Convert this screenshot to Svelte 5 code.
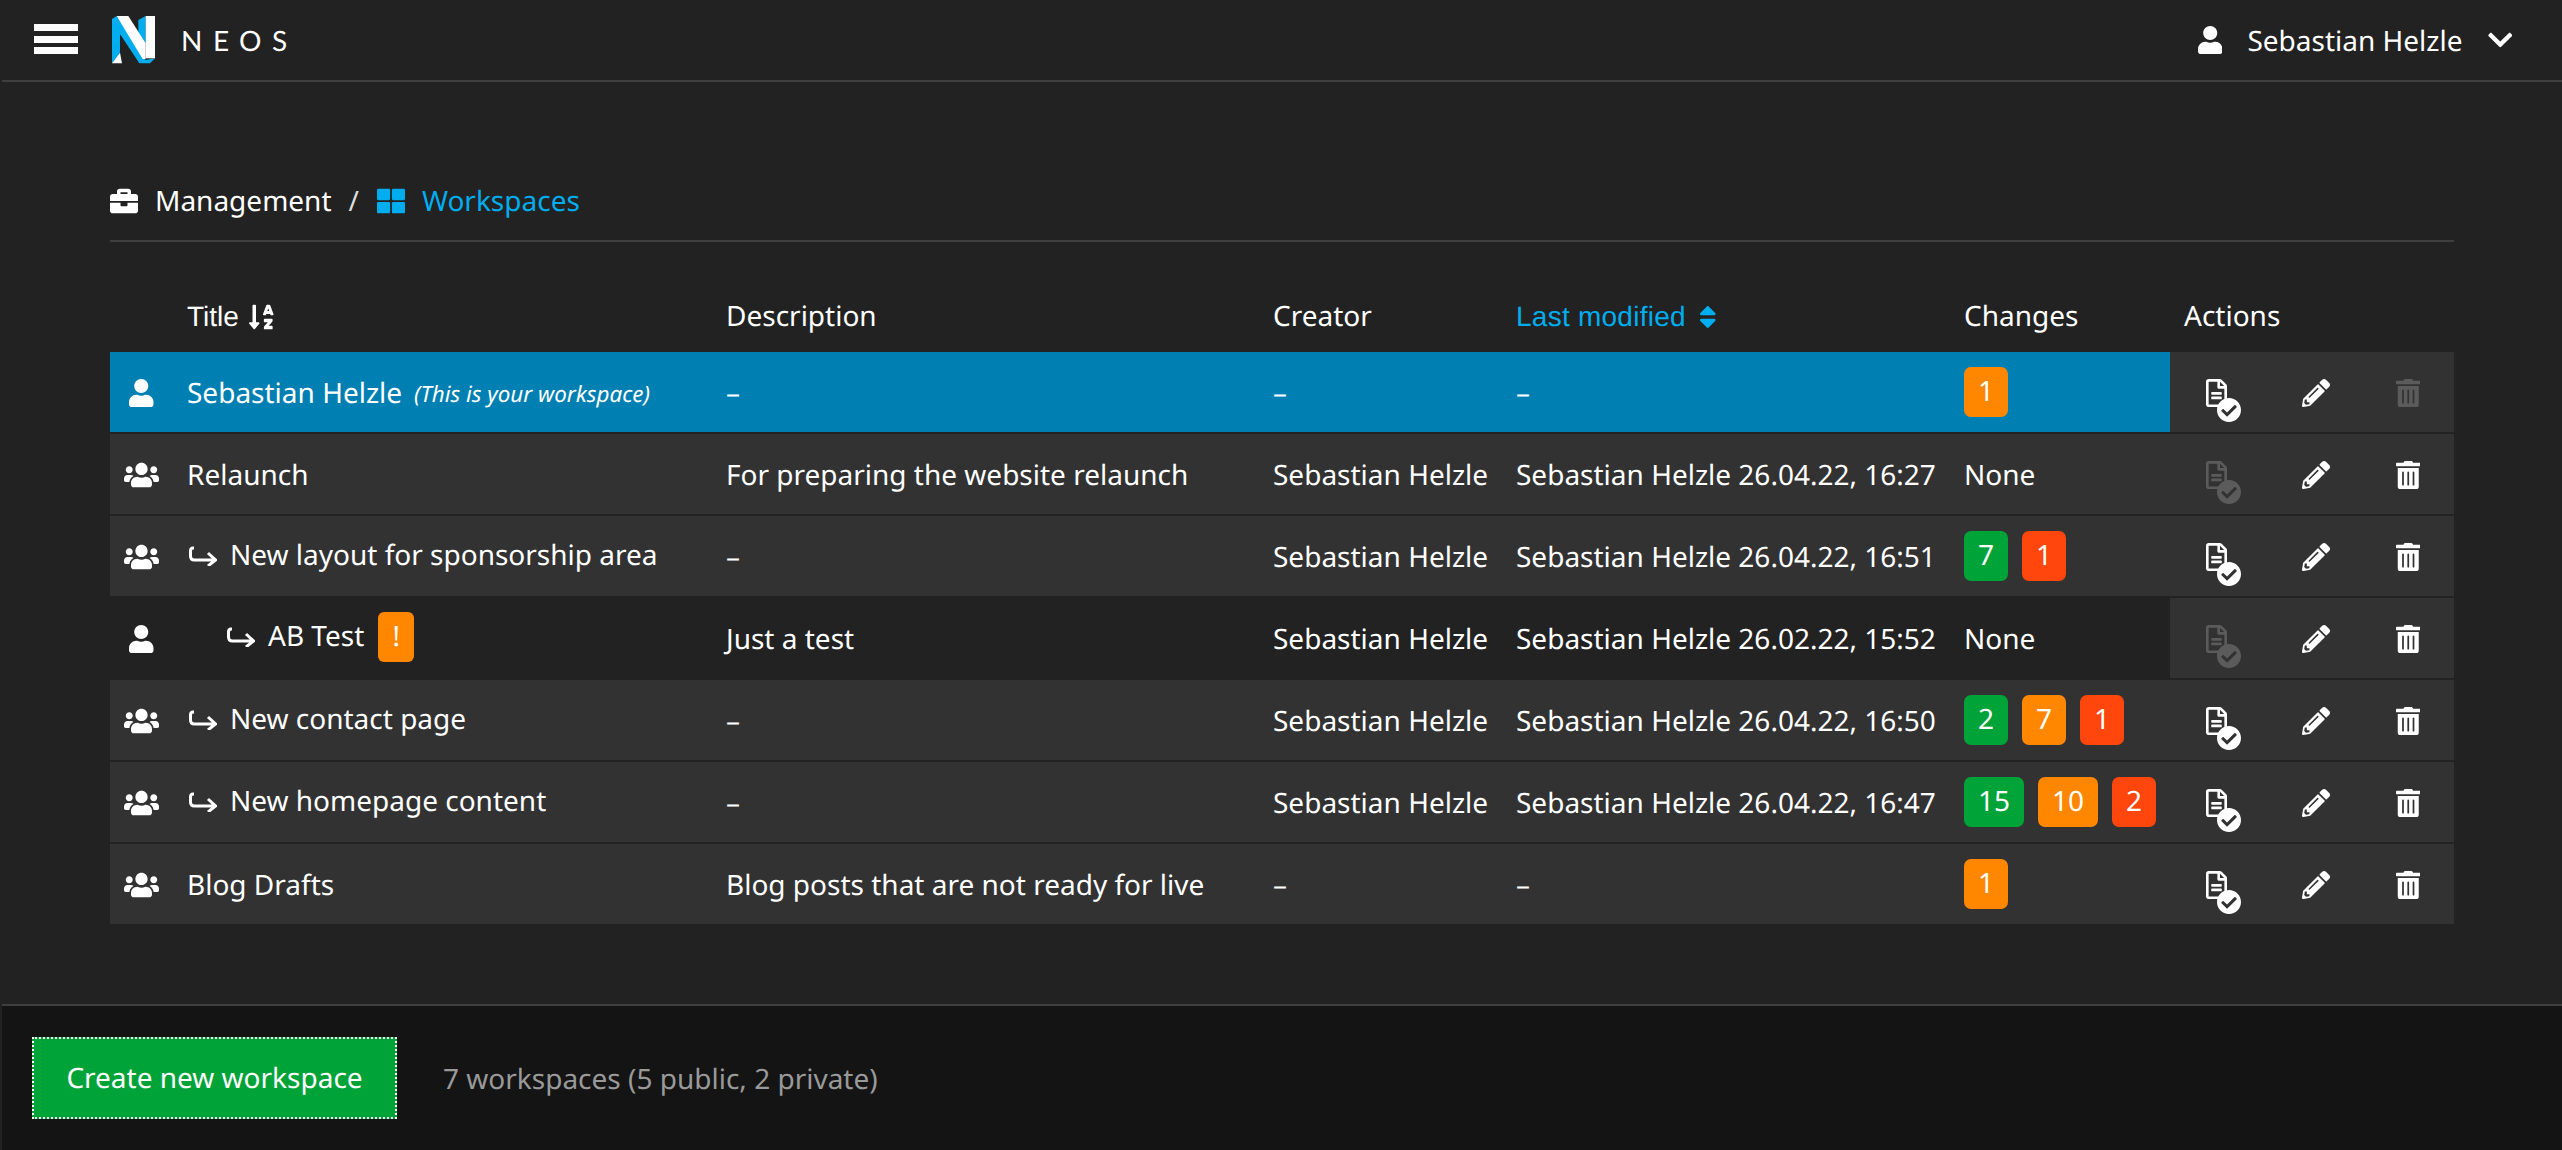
<script>
  const rows = [
    { icon: 'user', name: 'Sebastian Helzle', note: '(This is your workspace)', desc: '–', creator: '–', modified: '–', badges: [['o', 1]], active: true, publish: true, del: false },
    { icon: 'users', name: 'Relaunch', desc: 'For preparing the website relaunch', creator: 'Sebastian Helzle', modified: 'Sebastian Helzle 26.04.22, 16:27', none: true, publish: false, del: true },
    { icon: 'users', name: 'New layout for sponsorship area', depth: 1, desc: '–', creator: 'Sebastian Helzle', modified: 'Sebastian Helzle 26.04.22, 16:51', badges: [['g', 7], ['r', 1]], publish: true, del: true },
    { icon: 'user', name: 'AB Test', depth: 2, warn: true, desc: 'Just a test', creator: 'Sebastian Helzle', modified: 'Sebastian Helzle 26.02.22, 15:52', none: true, dark: true, publish: false, del: true },
    { icon: 'users', name: 'New contact page', depth: 1, desc: '–', creator: 'Sebastian Helzle', modified: 'Sebastian Helzle 26.04.22, 16:50', badges: [['g', 2], ['o', 7], ['r', 1]], publish: true, del: true },
    { icon: 'users', name: 'New homepage content', depth: 1, desc: '–', creator: 'Sebastian Helzle', modified: 'Sebastian Helzle 26.04.22, 16:47', badges: [['g', 15], ['o', 10], ['r', 2]], publish: true, del: true },
    { icon: 'users', name: 'Blog Drafts', desc: 'Blog posts that are not ready for live', creator: '–', modified: '–', badges: [['o', 1]], publish: true, del: true }
  ];
  const P = {
    user: 'M224 256c70.7 0 128-57.3 128-128S294.7 0 224 0 96 57.3 96 128s57.3 128 128 128zm89.6 32h-16.7c-22.2 10.2-46.9 16-72.9 16s-50.6-5.8-72.9-16h-16.7C60.2 288 0 348.2 0 422.4V464c0 26.5 21.5 48 48 48h352c26.5 0 48-21.5 48-48v-41.6c0-74.2-60.2-134.4-134.4-134.4z',
    users: 'M96 224c35.3 0 64-28.7 64-64s-28.7-64-64-64-64 28.7-64 64 28.7 64 64 64zm448 0c35.3 0 64-28.7 64-64s-28.7-64-64-64-64 28.7-64 64 28.7 64 64 64zm32 32h-64c-17.6 0-33.5 7.1-45.1 18.6 40.3 22.1 68.9 62 75.1 109.4h66c17.7 0 32-14.3 32-32v-32c0-35.3-28.7-64-64-64zm-256 0c61.9 0 112-50.1 112-112S381.9 32 320 32 208 82.1 208 144s50.1 112 112 112zm76.8 32h-8.3c-20.8 10-43.9 16-68.5 16s-47.6-6-68.5-16h-8.3C179.6 288 128 339.6 128 403.2V432c0 26.5 21.5 48 48 48h288c26.5 0 48-21.5 48-48v-28.8c0-63.6-51.6-115.2-115.2-115.2zm-223.7-13.4C161.5 263.1 145.6 256 128 256H64c-35.3 0-64 28.7-64 64v32c0 17.7 14.3 32 32 32h65.9c6.3-47.4 34.9-87.3 75.2-109.4z',
    pencil: 'M497.9 142.1l-46.1 46.1c-4.7 4.7-12.3 4.7-17 0l-111-111c-4.7-4.7-4.7-12.3 0-17l46.1-46.1c18.7-18.7 49.1-18.7 67.9 0l60.1 60.1c18.8 18.7 18.8 49.1 0 67.9zM284.2 99.8L21.6 362.4.4 483.9c-2.9 16.4 11.4 30.6 27.8 27.8l121.5-21.3 262.6-262.6c4.7-4.7 4.7-12.3 0-17l-111-111c-4.8-4.7-12.4-4.7-17.1 0zM124.1 339.9c-5.5-5.5-5.5-14.3 0-19.8l154-154c5.5-5.5 14.3-5.5 19.8 0s5.5 14.3 0 19.8l-154 154c-5.5 5.5-14.3 5.5-19.8 0zM88 424h48v36.3l-64.5 11.3-31.1-31.1L51.7 376H88v48z',
    trash: 'M32 464a48 48 0 0 0 48 48h288a48 48 0 0 0 48-48V128H32zm272-256a16 16 0 0 1 32 0v224a16 16 0 0 1-32 0zm-96 0a16 16 0 0 1 32 0v224a16 16 0 0 1-32 0zm-96 0a16 16 0 0 1 32 0v224a16 16 0 0 1-32 0zM432 32H312l-9.4-18.7A24 24 0 0 0 281.1 0H166.8a23.72 23.72 0 0 0-21.4 13.3L136 32H16A16 16 0 0 0 0 48v32a16 16 0 0 0 16 16h416a16 16 0 0 0 16-16V48a16 16 0 0 0-16-16z',
    file: 'M288 248v28c0 6.6-5.4 12-12 12H108c-6.6 0-12-5.4-12-12v-28c0-6.6 5.4-12 12-12h168c6.6 0 12 5.4 12 12zm-12 72H108c-6.6 0-12 5.4-12 12v28c0 6.6 5.4 12 12 12h168c6.6 0 12-5.4 12-12v-28c0-6.6-5.4-12-12-12zm108-188.1V464c0 26.5-21.5 48-48 48H48c-26.5 0-48-21.5-48-48V48C0 21.5 21.5 0 48 0h204.1C264.8 0 277 5.1 286 14.1L369.9 98c9 8.9 14.1 21.2 14.1 33.9zm-128-80V128h76.1L256 51.9zM336 464V176H232c-13.3 0-24-10.7-24-24V48H48v416h288z',
    check: 'M504 256c0 136.967-111.033 248-248 248S8 392.967 8 256 119.033 8 256 8s248 111.033 248 248zM227.314 387.314l184-184c6.248-6.248 6.248-16.379 0-22.627l-22.627-22.627c-6.248-6.249-16.379-6.249-22.628 0L216 308.118l-70.059-70.059c-6.248-6.248-16.379-6.248-22.628 0l-22.627 22.627c-6.248 6.248-6.248 16.379 0 22.627l104 104c6.249 6.249 16.379 6.249 22.628 0z',
    briefcase: 'M320 336c0 8.84-7.16 16-16 16h-96c-8.84 0-16-7.16-16-16v-48H0v144c0 25.6 22.4 48 48 48h416c25.6 0 48-22.4 48-48V288H320v48zm144-208h-80V80c0-25.6-22.4-48-48-48H176c-25.6 0-48 22.4-48 48v48H48c-25.6 0-48 22.4-48 48v80h512v-80c0-25.6-22.4-48-48-48zm-144 0H192V96h128v32z',
    grid: 'M296 32h192c13.255 0 24 10.745 24 24v160c0 13.255-10.745 24-24 24H296c-13.255 0-24-10.745-24-24V56c0-13.255 10.745-24 24-24zm-80 0H24C10.745 32 0 42.745 0 56v160c0 13.255 10.745 24 24 24h192c13.255 0 24-10.745 24-24V56c0-13.255-10.745-24-24-24zM0 296v160c0 13.255 10.745 24 24 24h192c13.255 0 24-10.745 24-24V296c0-13.255-10.745-24-24-24H24c-13.255 0-24 10.745-24 24zm296 184h192c13.255 0 24-10.745 24-24V296c0-13.255-10.745-24-24-24H296c-13.255 0-24 10.745-24 24v160c0 13.255 10.745 24 24 24z',
    az: 'M176 352h-48V48a16 16 0 0 0-16-16H80a16 16 0 0 0-16 16v304H16c-14.19 0-21.36 17.24-11.29 27.31l80 96a16 16 0 0 0 22.62 0l80-96C197.35 369.26 190.22 352 176 352zm240-64H288a16 16 0 0 0-16 16v32a16 16 0 0 0 16 16h56l-61.26 70.45A32 32 0 0 0 272 446.37V464a16 16 0 0 0 16 16h128a16 16 0 0 0 16-16v-32a16 16 0 0 0-16-16h-56l61.26-70.45A32 32 0 0 0 432 321.63V304a16 16 0 0 0-16-16zm31.06-85.38l-59.27-160A16 16 0 0 0 372.72 32h-41.44a16 16 0 0 0-15.07 10.62l-59.27 160A16 16 0 0 0 272 224h24.83a16 16 0 0 0 15.23-11.08l4.42-12.92h71l4.42 12.92A16 16 0 0 0 407.16 224H432a16 16 0 0 0 15.06-21.38zM335.61 144L352 96l16.39 48z',
    sort: 'M41 288h238c21.4 0 32.1 25.9 17 41L177 448c-9.4 9.4-24.6 9.4-33.9 0L24 329c-15.1-15.1-4.4-41 17-41zm255-105L177 64c-9.4-9.4-24.6-9.4-33.9 0L24 183c-15.1 15.1-4.4 41 17 41h238c21.4 0 32.1-25.9 17-41z',
    chevron: 'M207.029 381.476L12.686 187.132c-9.373-9.373-9.373-24.569 0-33.941l22.667-22.667c9.357-9.357 24.522-9.375 33.901-.04L224 284.505l154.745-154.021c9.379-9.335 24.544-9.317 33.901.04l22.667 22.667c9.373 9.373 9.373 24.569 0 33.941L240.971 381.476c-9.373 9.372-24.569 9.372-33.942 0z'
  };
  const W = { user: 448, users: 640, pencil: 512, trash: 448, briefcase: 512, grid: 512, az: 448, sort: 320, chevron: 448 };
</script>

{#snippet icon(name, cls = '')}
  <svg class="fa {cls}" viewBox="0 0 {W[name]} 512" style="width:{W[name] * 28 / 512}px" aria-hidden="true"><path d={P[name]} /></svg>
{/snippet}

<div class="page">
  <header class="top">
    <div class="burger"><span></span><span></span><span></span></div>
    <svg class="logo" viewBox="36 18 129 144" aria-hidden="true">
      <polygon fill="#00adee" points="36,27 50,18 137,150 165,145 150,160 118,160 60,72 60,128 36,160" />
      <polygon fill="#00adee" points="115,30 137,18 137,104 115,70" />
      <polygon fill="#fff" points="50,18 85,18 137,100 137,147 128,147" />
      <polygon fill="#fff" points="137,18 165,18 165,145 137,145" />
      <polygon fill="#fff" points="36,160 60,128 66,160" />
    </svg>
    <span class="brand">NEOS</span>
    <div class="account">
      {@render icon('user')}
      <span class="account-name">Sebastian Helzle</span>
      {@render icon('chevron', 'chev')}
    </div>
  </header>

  <main class="main">
    <nav class="crumbs">
      {@render icon('briefcase')}
      <span class="crumb">Management</span>
      <span class="sep">/</span>
      {@render icon('grid', 'blue')}
      <span class="crumb blue-text">Workspaces</span>
    </nav>

    <table class="tbl">
      <colgroup>
        <col class="c-icon" /><col class="c-title" /><col class="c-desc" /><col class="c-creator" /><col class="c-mod" /><col class="c-chg" /><col class="c-act" />
      </colgroup>
      <thead>
        <tr>
          <th></th>
          <th><span class="sans">Title</span> {@render icon('az', 'th-ic')}</th>
          <th>Description</th>
          <th>Creator</th>
          <th class="blue-text"><span class="sans wide">Last modified</span> {@render icon('sort', 'th-ic2 blue')}</th>
          <th>Changes</th>
          <th>Actions</th>
        </tr>
      </thead>
      <tbody>
        {#each rows as r}
          <tr class:active={r.active} class:dark={r.dark}>
            <td class="ic-cell"><div class="ic-box">{@render icon(r.icon)}</div></td>
            <td>
              <div class="title" class:d1={r.depth === 1} class:d2={r.depth === 2}>
                {#if r.depth}
                  <svg class="arrow" viewBox="0 0 30 20" aria-hidden="true"><path d="M7 2H6Q3.5 2 3.5 5V10Q3.5 14 7.5 14H28M21 7L28.5 14L21 20" /></svg>
                {/if}
                <span>{r.name}</span>
                {#if r.note}<em class="note">{r.note}</em>{/if}
                {#if r.warn}<span class="warn">!</span>{/if}
              </div>
            </td>
            <td>{r.desc}</td>
            <td>{r.creator}</td>
            <td>{r.modified}</td>
            <td>
              {#if r.none}None{:else}
                <div class="badges">
                  {#each r.badges as b}<span class="badge {b[0]}">{b[1]}</span>{/each}
                </div>
              {/if}
            </td>
            <td class="act">
              <div class="btns">
                <span class="btn first" class:off={!r.publish}>
                  <svg class="stack" viewBox="0 0 35 28" aria-hidden="true">
                    <svg x="0" y="0" width="21" height="28" viewBox="0 0 384 512"><path d={P.file} /></svg>
                    <svg x="11" y="19" width="24" height="24" viewBox="8 8 496 496" overflow="visible"><path d={P.check} /></svg>
                  </svg>
                </span>
                <span class="btn">{@render icon('pencil')}</span>
                <span class="btn" class:off={!r.del}>{@render icon('trash')}</span>
              </div>
            </td>
          </tr>
        {/each}
      </tbody>
    </table>
  </main>

  <footer class="foot">
    <span class="create">Create new workspace</span>
    <span class="status">7 workspaces (5 public, 2 private)</span>
  </footer>
</div>

<style>
  :global(body) { margin: 0; background: #222; }
  .page {
    box-sizing: border-box;
    height: 1150px;
    margin-left: 2px;
    display: flex;
    flex-direction: column;
    background: #222;
    color: #fff;
    font: 400 28px/1.4 "Noto Sans", sans-serif;
    text-rendering: geometricPrecision;
    overflow: hidden;
  }
  .fa { height: 28px; fill: currentColor; flex: none; display: block; }
  .blue { color: #00adee; }
  .blue-text { color: #00adee; }
  .sans { font-family: "Liberation Sans", Arial, sans-serif; }
  .wide { letter-spacing: 0.25px; }

  .top {
    box-sizing: border-box;
    height: 82px;
    flex: none;
    border-bottom: 2px solid #3f3f3f;
    display: flex;
    align-items: center;
  }
  .burger { margin-left: 32px; width: 44px; height: 30px; margin-top: -2px; display: flex; flex-direction: column; justify-content: space-between; }
  .burger span { height: 7px; background: #fff; display: block; }
  .logo { width: 43px; height: 48px; margin-left: 34px; }
  .brand { margin-left: 26px; font: 400 28px/1 Lato, sans-serif; letter-spacing: 10.5px; }
  .account { margin-left: auto; display: flex; align-items: center; padding-right: 50px; }
  .account-name { margin-left: 25px; margin-right: 25px; padding-top: 3px; }

  .main { flex: 1; padding: 0 108px; min-height: 0; }
  .crumbs {
    margin-top: 92px;
    height: 68px;
    box-sizing: border-box;
    border-bottom: 2px solid #3f3f3f;
    display: flex;
    align-items: flex-start;
    line-height: 54px;
  }
  .crumbs .fa { margin-top: 13px; }
  .crumb { margin-left: 17px; }
  .sep { margin: 0 18px 0 17px; color: #ddd; }

  .tbl { margin-top: 38px; width: 2344px; table-layout: fixed; border-collapse: separate; border-spacing: 0; }
  .c-icon { width: 63px; } .c-title { width: 539px; } .c-desc { width: 547px; } .c-creator { width: 243px; }
  .c-mod { width: 448px; } .c-chg { width: 220px; } .c-act { width: 284px; }
  th { box-sizing: border-box; height: 72px; padding: 2px 14px 0; text-align: left; font-weight: 400; white-space: nowrap; }
  th .fa { display: inline-block; vertical-align: -5px; }
  .th-ic { margin-left: 3px; }
  .th-ic2 { margin-left: 6px; }
  td {
    box-sizing: border-box;
    height: 82px;
    padding: 3px 14px 0;
    background: #323232;
    border-bottom: 2px solid #222;
    white-space: nowrap;
  }
  tbody tr:last-child td { height: 80px; border-bottom: 0; }
  tr.active td { background: #007fb2; }
  tr.dark td { background: #222; border-bottom-color: #222; }
  tr td.act { background: #323232; padding: 2px 0 0 6px; }
  td.ic-cell { padding: 1px 0 0 14px; }
  .ic-box { width: 35px; display: flex; justify-content: center; }
  .title { display: flex; align-items: center; }
  .title.d1 { margin-top: -3px; }
  .title.d2 { padding-left: 38px; margin-top: -6px; }
  .arrow { width: 30px; height: 20px; margin-right: 13px; fill: none; stroke: #fff; stroke-width: 3; flex: none; }
  .title.d2 .arrow { margin-right: 13px; }
  .note { font-size: 22.4px; margin-left: 12px; }
  .warn { margin-left: 14px; width: 36px; height: 50px; background: #ff8700; border-radius: 6px; display: flex; align-items: center; justify-content: center; }
  .badges { display: flex; gap: 14px; margin-top: -3px; }
  .badge { height: 50px; padding: 0 14px; border-radius: 7px; display: flex; align-items: center; }
  .g { background: #00a338; } .o { background: #ff8700; } .r { background: #ff460d; }
  .btns { display: flex; align-items: center; }
  .btn { width: 92px; display: flex; justify-content: center; }
  .btn.first { width: 94px; }
  .off { opacity: 0.2; }
  .stack { width: 35px; height: 28px; fill: #fff; overflow: visible; display: block; }

  .foot {
    box-sizing: border-box;
    height: 146px;
    flex: none;
    border-top: 2px solid #3f3f3f;
    background: #141414;
    display: flex;
    align-items: center;
    padding-left: 30px;
  }
  .create {
    box-sizing: border-box;
    width: 365px;
    height: 82px;
    padding-top: 2px;
    background: #00a338;
    border: 2px dotted #fff;
    display: flex;
    align-items: center;
    justify-content: center;
  }
  .status { margin-left: 46px; padding-top: 3px; color: #999; }
</style>
